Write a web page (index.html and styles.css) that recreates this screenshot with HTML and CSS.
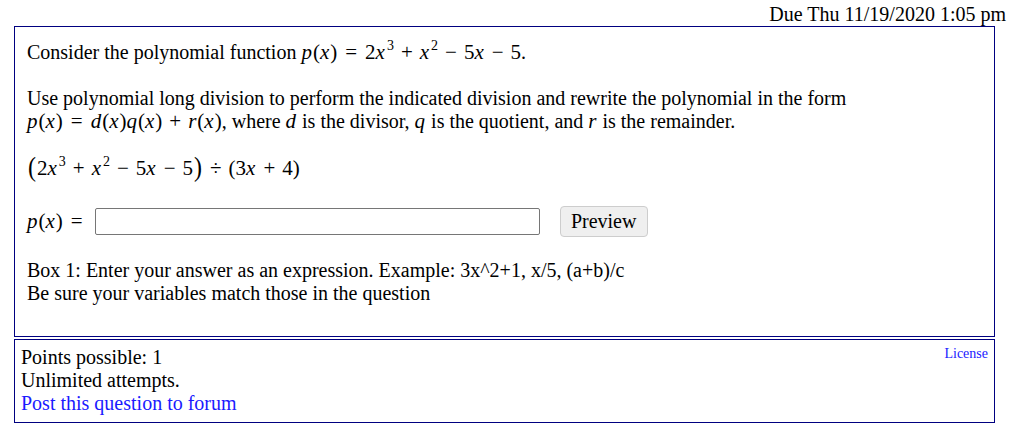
FILE: index.html
```html
<!DOCTYPE html>
<html>
<head>
<meta charset="utf-8">
<link rel="stylesheet" href="styles.css">
</head>
<body>
<div class="due">Due Thu 11/19/2020 1:05 pm</div>
<div class="question">
  <p class="line first">Consider the polynomial function <span class="m"><i>p</i>(<i>x</i>)<span class="rel">=</span>2<i>x</i><sup>3</sup><span class="bin">+</span><i>x</i><sup>2</sup><span class="bin">−</span>5<i>x</i><span class="bin">−</span>5</span>.</p>
  <p class="para">Use polynomial long division to perform the indicated division and rewrite the polynomial in the form<br><span class="m"><i>p</i>(<i>x</i>)<span class="rel">=</span><i>d</i>(<i>x</i>)<i>q</i>(<i>x</i>)<span class="bin">+</span><i>r</i>(<i>x</i>)</span>, where <span class="m"><i>d</i></span> is the divisor, <span class="m"><i>q</i></span> is the quotient, and <span class="m"><i>r</i></span> is the remainder.</p>
  <p class="para expr"><span class="m"><span class="big">(</span>2<i>x</i><sup>3</sup><span class="bin">+</span><i>x</i><sup>2</sup><span class="bin">−</span>5<i>x</i><span class="bin">−</span>5<span class="big">)</span><span class="bin">÷</span>(3<i>x</i><span class="bin">+</span>4)</span></p>
  <div class="answer">
    <span class="m"><i>p</i>(<i>x</i>)<span class="rel">=</span></span>
    <input class="box" type="text">
    <button class="preview" type="button">Preview</button>
  </div>
  <p class="para help">Box 1: Enter your answer as an expression. Example: 3x^2+1, x/5, (a+b)/c<br>Be sure your variables match those in the question</p>
</div>
<div class="info">
  <a class="license" href="#">License</a>
  <div>Points possible: 1</div>
  <div>Unlimited attempts.</div>
  <div><a class="forum" href="#">Post this question to forum</a></div>
</div>
</body>
</html>
```
FILE: styles.css
```css
html, body {
  margin: 0;
  padding: 0;
  background: #fff;
}
body {
  font-family: "Liberation Serif", "Times New Roman", serif;
  font-size: 20px;
  line-height: 23px;
  color: #000;
  width: 1020px;
}
.due {
  text-align: right;
  padding: 3px 14px 0 0;
  height: 23px;
}
.question {
  margin: 0 25px 0 14px;
  border: 1px solid #000080;
  padding: 14px 12px 31px 12px;
}
.question p {
  margin: 0;
}
.para {
  margin-top: 23px !important;
}
.m {
  font-family: "Liberation Serif", "DejaVu Serif", serif;
  font-size: 21px;
  white-space: nowrap;
}
.m i {
  font-style: italic;
  margin-right: 1px;
}
.m sup {
  font-size: 14px;
  line-height: 0;
  vertical-align: 0;
  position: relative;
  top: -9px;
  margin-left: 1px;
}
.rel {
  margin: 0 8px;
}
.bin {
  margin: 0 7px;
}
.big {
  font-size: 24px;
  display: inline-block;
  transform: scaleY(1.15);
  margin: 0 1px;
}
.expr {
  height: 23px;
}
.answer {
  margin-top: 27px;
  display: flex;
  align-items: center;
  height: 31px;
}
.box {
  width: 445px;
  height: 27px;
  box-sizing: border-box;
  border: 1px solid #767676;
  border-radius: 2px;
  margin: 0 0 0 4px;
  padding: 0;
  font-size: 16px;
}
.preview {
  margin-left: 20px;
  width: 88px;
  height: 31px;
  box-sizing: border-box;
  background: #efefef;
  border: 1px solid #cdcdcd;
  border-radius: 4px;
  font-family: "Liberation Serif", serif;
  font-size: 20px;
  color: #000;
  padding: 0;
}
.help {
  margin-top: 22px !important;
}
.info {
  position: relative;
  margin: 2px 25px 0 14px;
  border: 1px solid #000080;
  padding: 6px 6px 7px 6px;
}
.license {
  position: absolute;
  right: 6px;
  top: 6px;
  font-size: 14px;
  line-height: 16px;
  color: #1a1aff;
  text-decoration: none;
}
.forum {
  color: #1a1aff;
  text-decoration: none;
}
```
